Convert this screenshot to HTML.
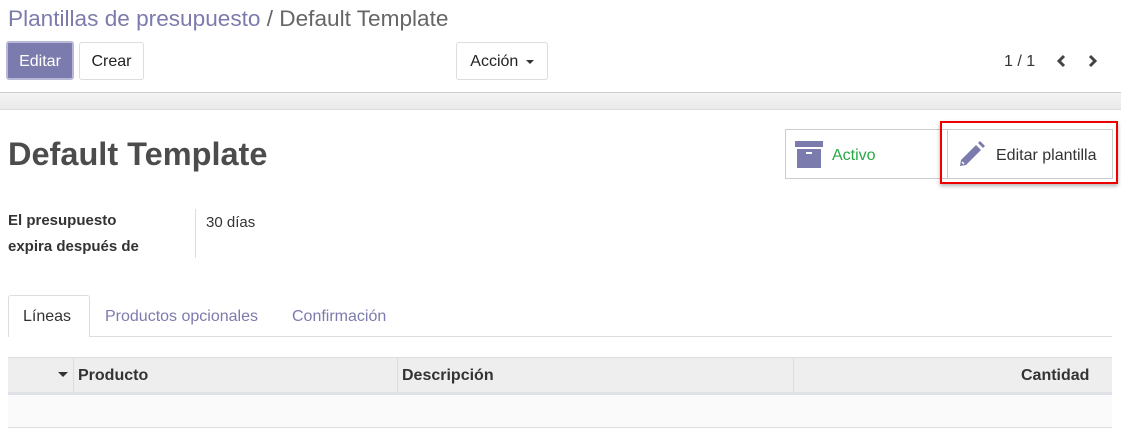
<!DOCTYPE html>
<html><head><meta charset="utf-8"><style>
body{margin:0;width:1121px;height:447px;background:#fff;font-family:"Liberation Sans",sans-serif;position:relative;overflow:hidden;color:#4c4c4c}
.a{position:absolute}
.btn{position:absolute;border:1px solid #ddd;border-radius:3px;background:#fff;font-size:16px;color:#222;text-align:center;box-sizing:border-box}
</style></head><body>
<div class="a" style="left:8px;top:6px;font-size:22.6px;color:#7c7bad">Plantillas de presupuesto <span style="color:#666">/ Default Template</span></div>
<div class="btn" style="left:6px;top:41px;width:68px;height:39px;line-height:38px;background:#7c7bad;color:#fff;border:2px solid #b9b8d8">Editar</div>
<div class="btn" style="left:79px;top:42px;width:65px;height:38px;line-height:38px">Crear</div>
<div class="btn" style="left:456px;top:42px;width:92px;height:38px;line-height:38px">Acción <span style="display:inline-block;width:0;height:0;border-left:4px solid transparent;border-right:4px solid transparent;border-top:4px solid #333;vertical-align:middle;margin-left:3px"></span></div>
<div class="a" style="left:1004px;top:53px;font-size:16px;color:#333">1 / 1</div>
<svg class="a" style="left:1054px;top:54px" width="60" height="14"><path d="M10 2 L5 7 L10 12" stroke="#444" stroke-width="3" fill="none"/><path d="M36 2 L41 7 L36 12" stroke="#444" stroke-width="3" fill="none"/></svg>
<div class="a" style="left:0;top:92px;width:1121px;height:16px;background:linear-gradient(#f4f4f4,#eaeaea);border-top:1px solid #ccc;border-bottom:1px solid #ddd"></div>
<div class="a" style="left:8px;top:136px;font-size:32.5px;font-weight:bold;color:#4c4c4c">Default Template</div>
<div class="a" style="left:785px;top:129px;width:328px;height:50px;border:1px solid #ccc;box-sizing:border-box"></div>
<div class="a" style="left:947px;top:130px;width:1px;height:48px;background:#ccc"></div>
<svg class="a" style="left:795px;top:141px" width="28" height="28"><rect x="0" y="0" width="28" height="6" fill="#7c7bad"/><rect x="2" y="8" width="24" height="19" fill="#7c7bad"/><rect x="11" y="11" width="6" height="2" fill="#fff"/></svg>
<div class="a" style="left:832px;top:147px;font-size:16px;color:#28a745">Activo</div>
<svg class="a" style="left:958px;top:140px" width="28" height="28"><path d="M3 20 L18 5 L23 10 L8 25 L2 26 Z" fill="#7c7bad"/><path d="M20 3 L22 1 L27 6 L25 8 Z" fill="#7c7bad"/><path d="M4 22 L6 24" stroke="#fff" stroke-width="1.5"/></svg>
<div class="a" style="left:996px;top:147px;font-size:16px;color:#333">Editar plantilla</div>
<div class="a" style="left:940px;top:121px;width:178px;height:63px;border:2px solid #e00;box-sizing:border-box;box-shadow:0 2px 4px rgba(0,0,0,.3)"></div>
<div class="a" style="left:8px;top:208px;font-size:15px;font-weight:bold;color:#333;line-height:26px">El presupuesto<br>expira después de</div>
<div class="a" style="left:195px;top:209px;width:1px;height:49px;background:#ddd"></div>
<div class="a" style="left:206px;top:214px;font-size:15px;color:#333">30 días</div>
<div class="a" style="left:8px;top:336px;width:1104px;height:1px;background:#ddd"></div>
<div class="a" style="left:8px;top:295px;width:82px;height:42px;border:1px solid #ddd;border-bottom:none;border-radius:3px 3px 0 0;background:#fff;box-sizing:border-box"></div>
<div class="a" style="left:23px;top:308px;font-size:16px;color:#333">Líneas</div>
<div class="a" style="left:105px;top:308px;font-size:16px;color:#7c7bad">Productos opcionales</div>
<div class="a" style="left:292px;top:308px;font-size:16px;color:#7c7bad">Confirmación</div>
<div class="a" style="left:8px;top:357px;width:1104px;height:34px;background:#eee;border-top:1px solid #ddd;border-bottom:3px solid #dee2e6"></div>
<div class="a" style="left:73px;top:358px;width:1px;height:34px;background:#ddd"></div>
<div class="a" style="left:397px;top:358px;width:1px;height:34px;background:#ddd"></div>
<div class="a" style="left:793px;top:358px;width:1px;height:34px;background:#ddd"></div>
<div class="a" style="left:58px;top:372px;width:0;height:0;border-left:5px solid transparent;border-right:5px solid transparent;border-top:5px solid #333"></div>
<div class="a" style="left:78px;top:367px;font-size:16px;font-weight:bold;color:#333">Producto</div>
<div class="a" style="left:402px;top:367px;font-size:16px;font-weight:bold;color:#333">Descripción</div>
<div class="a" style="left:1021px;top:367px;font-size:16px;font-weight:bold;color:#333">Cantidad</div>
<div class="a" style="left:8px;top:395px;width:1104px;height:32px;background:#fafafa;border-bottom:1px solid #ddd"></div>
</body></html>
